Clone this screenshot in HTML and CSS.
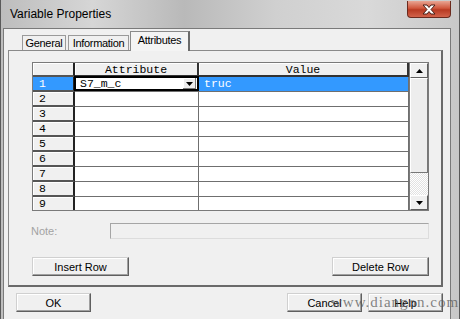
FILE: index.html
```html
<!DOCTYPE html>
<html lang="en">
<head>
    <meta charset="UTF-8">
    <title>Variable Properties</title>
    <link rel="stylesheet" href="styles.css">
</head>
<body>
    <div class="window">
        <div class="titlebar">
            <span class="title">Variable Properties</span>
            <span class="close">
                <svg width="14" height="11" viewBox="0 0 14 11"><path d="M1 1h4l2 2.5 2-2.5h4l-4 4.5 4 4.5h-4l-2-2.5-2 2.5h-4l4-4.5z" fill="#fff" stroke="#4a2018" stroke-width="1"/></svg>
            </span>
        </div>
        <div class="client">
            <div class="tabs">
                <div class="tab t-general">General</div>
                <div class="tab t-info">Information</div>
                <div class="tab t-attr active">Attributes</div>
            </div>
            <div class="panel">
                <div class="grid">
                    <div class="sheet">
                        <div class="rh"></div>
                        <div class="ch">Attribute</div>
                        <div class="ch">Value</div>

                        <div class="rh sel">1</div>
                        <div class="cell combo-cell">
                            <div class="combo"><span>S7_m_c</span><span class="drop"><svg width="7" height="4" viewBox="0 0 7 4"><path d="M0 0h7l-3.5 4z" fill="#000"/></svg></span></div>
                        </div>
                        <div class="cell sel">truc</div>

                        <div class="rh">2</div><div class="cell"></div><div class="cell"></div>
                        <div class="rh">3</div><div class="cell"></div><div class="cell"></div>
                        <div class="rh">4</div><div class="cell"></div><div class="cell"></div>
                        <div class="rh">5</div><div class="cell"></div><div class="cell"></div>
                        <div class="rh">6</div><div class="cell"></div><div class="cell"></div>
                        <div class="rh">7</div><div class="cell"></div><div class="cell"></div>
                        <div class="rh">8</div><div class="cell"></div><div class="cell"></div>
                        <div class="rh">9</div><div class="cell"></div><div class="cell"></div>
                    </div>
                    <div class="vscroll">
                        <div class="sbtn"><svg width="7" height="4" viewBox="0 0 7 4"><path d="M0 4h7l-3.5-4z" fill="#000"/></svg></div>
                        <div class="thumb"></div>
                        <div class="track"></div>
                        <div class="sbtn"><svg width="7" height="4" viewBox="0 0 7 4"><path d="M0 0h7l-3.5 4z" fill="#000"/></svg></div>
                    </div>
                </div>
                <div class="note-row">
                    <span class="note-label">Note:</span>
                    <div class="note-box"></div>
                </div>
                <div class="row-buttons">
                    <button class="btn wide">Insert Row</button>
                    <button class="btn wide">Delete Row</button>
                </div>
            </div>
            <div class="footer">
                <button class="btn">OK</button>
                <span class="spacer"></span>
                <button class="btn">Cancel</button>
                <button class="btn">Help</button>
            </div>
        </div>
        <div class="watermark">www.diangon.com</div>
    </div>
</body>
</html>
```

FILE: styles.css
```css
/* Classic dialog look */
body {
    margin: 0;
    font-family: "Liberation Sans", Arial, sans-serif;
    font-size: 11px;
    color: #000;
}
.window {
    position: relative;
    width: 460px;
    height: 319px;
    box-sizing: border-box;
    border-left: 1px solid #5a5a5a;
    border-right: 1px solid #5a5a5a;
    background: linear-gradient(to right, #bdbdbd, #d6d6d6 20%, #b9b9b9 40%, #d0d0d0 60%, #d9d9d9 80%, #c8c8c8);
    display: flex;
    flex-direction: column;
    overflow: hidden;
}
.titlebar {
    height: 28px;
    display: flex;
    align-items: flex-start;
    flex-shrink: 0;
}
.title {
    font-size: 12px;
    margin: 7px 0 0 9px;
}
.close {
    margin-left: auto;
    margin-right: 8px;
    margin-top: 1px;
    width: 44px;
    height: 17px;
    box-sizing: border-box;
    border: 1px solid #6b2a1e;
    border-top: none;
    border-radius: 0 0 4px 4px;
    background: linear-gradient(#e9a593, #d0573d 45%, #b83a22 55%, #d2624a);
    display: flex;
    align-items: center;
    justify-content: center;
}
.client {
    flex: 1;
    margin: 0 8px 0 2px;
    background: #f0f0f0;
    border: 1px solid #7a7a7a;
    border-bottom: none;
    padding-left: 4px;
    display: flex;
    flex-direction: column;
}
.tabs {
    display: flex;
    align-items: flex-end;
    height: 21px;
    padding-left: 14px;
    position: relative;
    z-index: 1;
}
.tab {
    height: 15px;
    line-height: 15px;
    text-align: center;
    letter-spacing: -0.3px;
    margin-right: 2px;
    background: #f0f0f0;
    border: 1px solid #9a9a9a;
    border-bottom: none;
    box-sizing: border-box;
}
.t-general {
    width: 44px;
}
.t-info {
    width: 61px;
}
.t-attr {
    width: 60px;
}
.tab.active {
    height: 20px;
    line-height: 16px;
    margin: 0 -1px -1px -1px;
    background: #f4f4f4;
    border-color: #8a8a8a;
    border-right: 2px solid #6a6a6a;
}
.panel {
    width: 435px;
    height: 237px;
    box-sizing: border-box;
    border: 1px solid #8a8a8a;
    border-right: 2px solid #6a6a6a;
    border-bottom: 2px solid #6a6a6a;
    background: #f0f0f0;
    padding: 11px 0 0 23px;
}
.grid {
    width: 397px;
    height: 149px;
    box-sizing: border-box;
    border: 1px solid #7a7a7a;
    display: flex;
    background: #fff;
}
.sheet {
    flex: 1;
    display: grid;
    grid-template-columns: 42px 124px 1fr;
    grid-template-rows: 14px;
    grid-auto-rows: 15px;
    overflow: hidden;
    font-family: "Liberation Mono", "DejaVu Sans Mono", monospace;
    font-size: 11.5px;
}
.sheet > div {
    box-sizing: border-box;
    border-right: 1px solid #6f6f6f;
    border-bottom: 1px solid #6f6f6f;
    line-height: 13px;
}
.rh {
    background: #f0f0f0;
    padding-left: 6px;
    border-right: 2px solid #222 !important;
    border-bottom: 2px solid #555 !important;
    box-shadow: inset 1px 1px #fff;
}
.ch {
    background: #f0f0f0;
    text-align: center;
    border-right: 2px solid #333 !important;
    border-bottom: 2px solid #333 !important;
    box-shadow: inset 1px 1px #fff;
}
.rh.sel {
    background: #3399ff;
    color: #fff;
    box-shadow: none;
}
.cell.sel {
    background: #3399ff;
    color: #fff;
    padding-left: 5px;
}
.combo-cell {
    padding: 0;
}
.combo {
    height: 15px;
    box-sizing: border-box;
    border: 2px solid #000;
    background: #fff;
    display: flex;
    align-items: center;
    padding-left: 4px;
    margin: -1px -1px 0 -1px;
}
.combo span:first-child {
    flex: 1;
}
.drop {
    width: 13px;
    height: 11px;
    margin-right: 1px;
    background: #ececec;
    box-shadow: inset -1px -1px #777, inset 1px 1px #fff;
    display: flex;
    align-items: center;
    justify-content: center;
}
.vscroll {
    width: 18px;
    border-left: 1px solid #7a7a7a;
    display: flex;
    flex-direction: column;
    background: #f0f0f0;
}
.sbtn {
    height: 15px;
    flex-shrink: 0;
    box-sizing: border-box;
    border: 1px solid;
    border-color: #fff #5f5f5f #5f5f5f #fff;
    display: flex;
    align-items: center;
    justify-content: center;
}
.thumb {
    height: 95px;
    box-sizing: border-box;
    background: #ededed;
    border: 1px solid;
    border-color: #fff #777 #777 #fff;
}
.track {
    flex: 1;
    background: repeating-conic-gradient(#fff 0 25%, #e2e2e2 0 50%) 0 0 / 2px 2px;
}
.note-row {
    display: flex;
    align-items: center;
    margin-top: 12px;
    margin-left: -1px;
}
.note-label {
    width: 79px;
    color: #a3a3a3;
}
.note-box {
    width: 319px;
    height: 16px;
    box-sizing: border-box;
    border: 1px solid #a5a5a5;
    border-right-color: #dcdcdc;
    border-bottom-color: #dcdcdc;
    background: #f0f0f0;
}
.row-buttons {
    display: flex;
    justify-content: space-between;
    width: 397px;
    margin-top: 18px;
}
.btn {
    font-family: "Liberation Sans", Arial, sans-serif;
    font-size: 11px;
    width: 75px;
    height: 19px;
    padding: 0;
    background: #f0f0f0;
    border: 1px solid;
    border-color: #d0d0d0 #5f5f5f #5f5f5f #d0d0d0;
    box-shadow: inset -1px -1px #a0a0a0, inset 1px 1px #fff;
    color: #000;
}
.btn.wide {
    width: 97px;
}
.footer {
    display: flex;
    gap: 6px;
    margin: 6px 7px 0 8px;
}
.spacer {
    flex: 1;
}
.watermark {
    position: absolute;
    left: 330px;
    top: 294px;
    font-family: "Liberation Serif", serif;
    font-size: 15px;
    letter-spacing: 1px;
    color: rgba(90, 90, 90, 0.75);
}
```
